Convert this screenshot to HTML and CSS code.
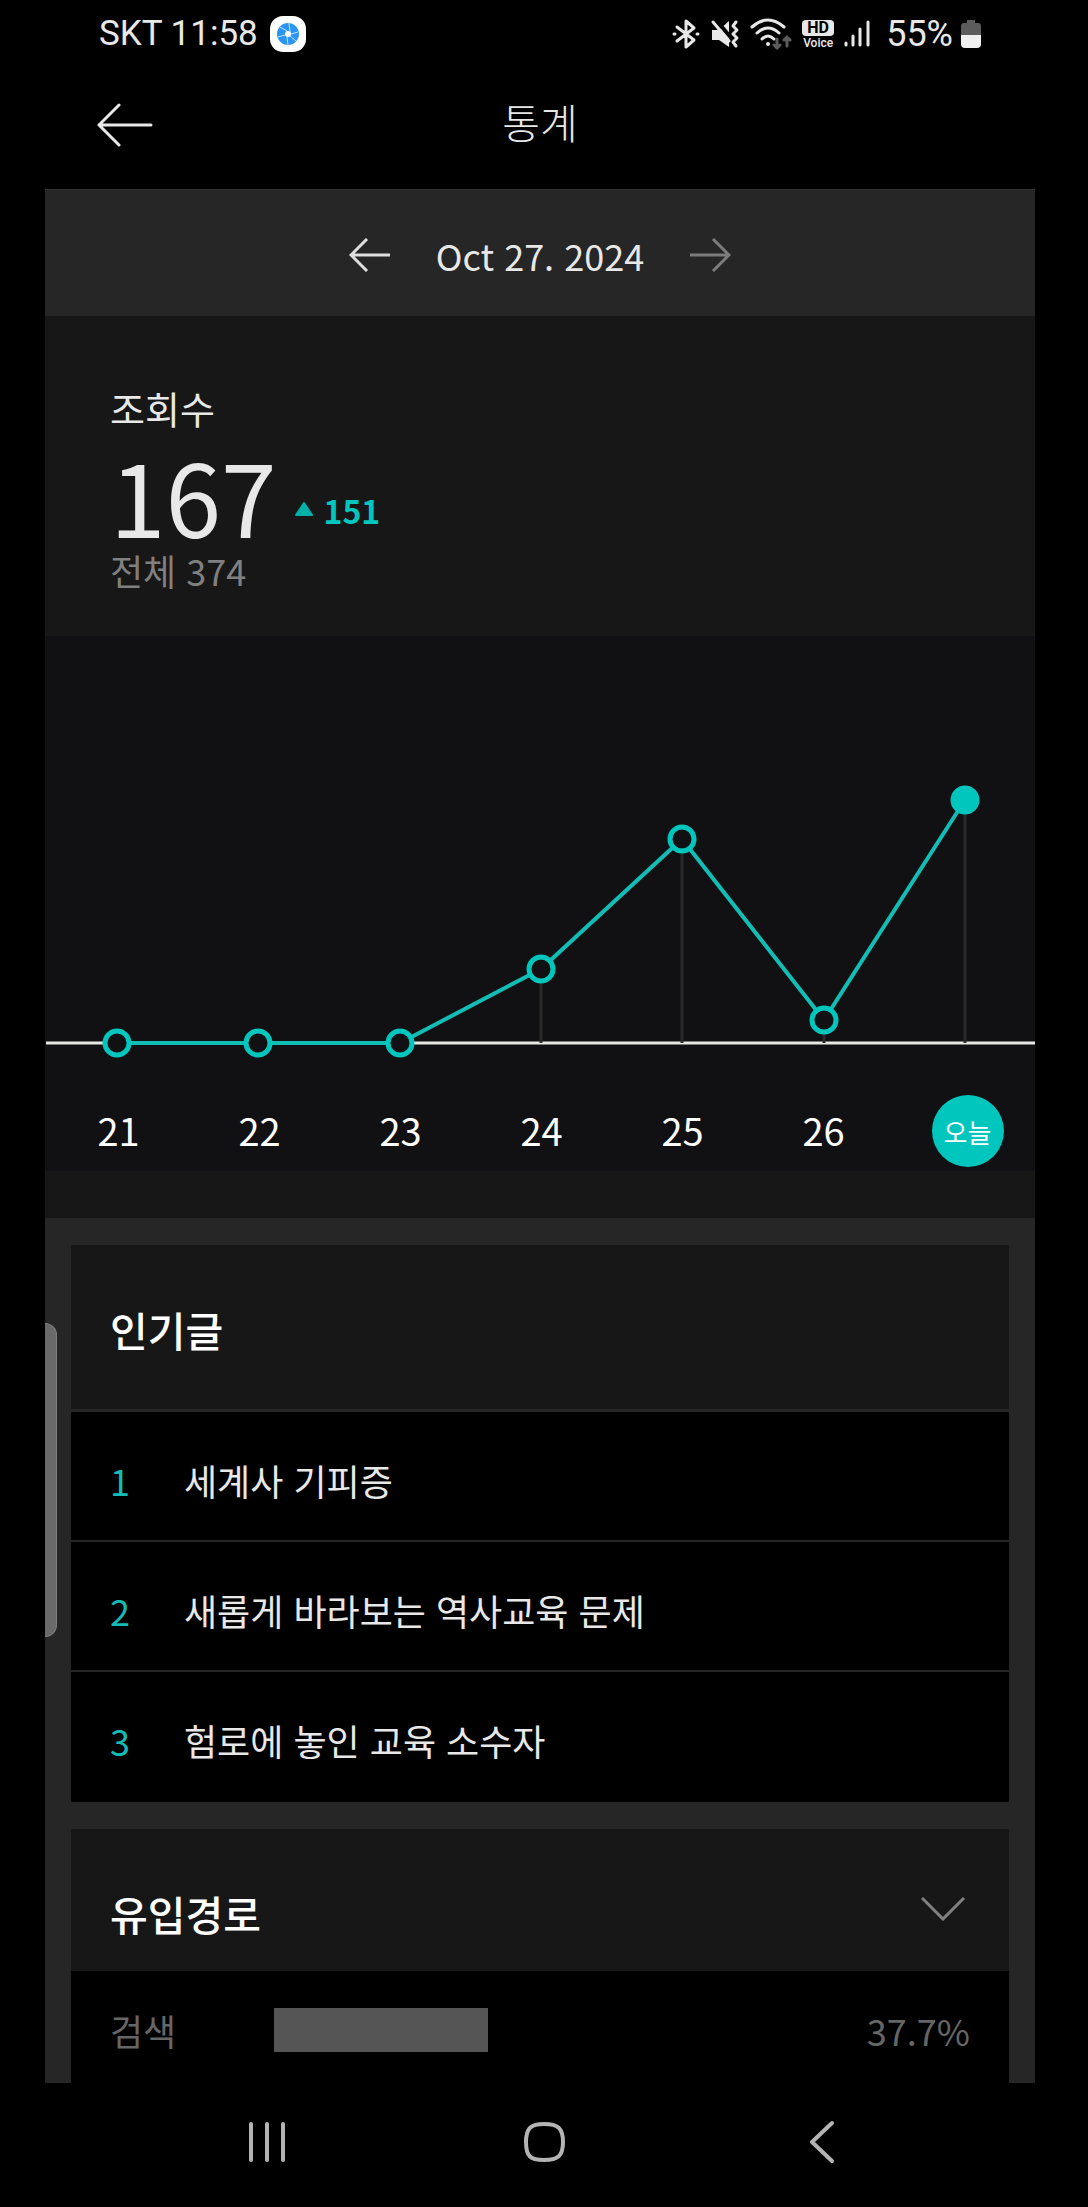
FILE: index.html
```html
<!DOCTYPE html>
<html lang="ko">
<head>
    <meta charset="UTF-8">
    <meta name="viewport" content="width=device-width, initial-scale=1.0">
    <title>통계</title>
    <link rel="stylesheet" href="styles.css">
</head>
<body>
    <div class="status-bar">
        <div class="status-left">
            <span>SKT 11:58</span>
            <svg width="36" height="36" viewBox="0 0 36 36">
                <rect x="0" y="0" width="36" height="36" rx="13" fill="#fff"/>
                <circle cx="18" cy="18" r="11" fill="#2b95f5"/>
                <g stroke="#bfe2ff" stroke-width="1" fill="none">
                    <path d="M17 15L10 11M20 16L19 7M21 18L28 16M20 20L26 25M17 21L18 29M15 19L8 21"/>
                </g>
                <circle cx="18" cy="18" r="3" fill="#fff"/>
            </svg>
        </div>
        <div class="status-right">
            <!-- bluetooth -->
            <svg width="28" height="32" viewBox="0 0 28 32" fill="none" stroke="#e8e8e8" stroke-width="3" stroke-linecap="round" stroke-linejoin="round">
                <path d="M5 9L22 22L14 29V3L22 10L5 23M2 16H3M25 16H26"/>
            </svg>
            <!-- mute / vibrate -->
            <svg width="30" height="32" viewBox="0 0 30 32">
                <path d="M2 12H9L19 3V29L9 22H2Z" fill="#e8e8e8"/>
                <path d="M6 2L22 21" stroke="#000" stroke-width="4"/>
                <path d="M3 4L19 23" stroke="#e8e8e8" stroke-width="3" stroke-linecap="round"/>
                <path d="M26 4L23 8L27 12L23 16L27 20L23 24L26 28" fill="none" stroke="#e8e8e8" stroke-width="3" stroke-linecap="round" stroke-linejoin="round"/>
            </svg>
            <!-- wifi -->
            <svg width="42" height="32" viewBox="0 0 42 32" fill="none" stroke="#e8e8e8" stroke-width="3" stroke-linecap="round">
                <path d="M2 9Q18 -5 34 9M7 15Q18 5 29 15M12 21Q18 15 24 21"/>
                <circle cx="18" cy="26" r="2" fill="#e8e8e8" stroke="none"/>
                <path d="M27 21V30M24 27L27 30L30 27M37 28V19M34 22L37 19L40 22" stroke="#5c5c5c"/>
            </svg>
            <span class="hd-voice"><b>HD</b><i>Voice</i></span>
            <!-- signal -->
            <svg width="26" height="32" viewBox="0 0 26 32" stroke="#e8e8e8" stroke-width="3" stroke-linecap="round">
                <path d="M2 25V27M9 18V27M16 11V27M24 4V27"/>
            </svg>
            <div class="battery">
                <span>55%</span>
                <svg width="20" height="32" viewBox="0 0 20 32">
                    <path d="M6 2H14V5H17Q20 5 20 8V17H0V8Q0 5 3 5H6Z" fill="#5c5c5c"/>
                    <path d="M0 17H20V26Q20 30 16 30H4Q0 30 0 26Z" fill="#f0f0f0"/>
                </svg>
            </div>
        </div>
    </div>

    <header class="app-bar">
        <button type="button" class="icon-btn" aria-label="뒤로">
            <svg width="56" height="44" viewBox="0 0 56 44" fill="none" stroke="#e8e8e8" stroke-width="3" stroke-linecap="round" stroke-linejoin="round">
                <path d="M54 22H2M22 2L2 22L22 42"/>
            </svg>
        </button>
        <h1>통계</h1>
    </header>

    <main class="content">
        <div class="date-bar">
            <div class="date-nav">
                <button type="button" class="icon-btn" aria-label="이전 날짜">
                    <svg width="42" height="34" viewBox="0 0 42 34" fill="none" stroke="#dedede" stroke-width="3">
                        <path d="M41 17H2M18 1L2 17L18 33"/>
                    </svg>
                </button>
                <span class="date">Oct 27. 2024</span>
                <button type="button" class="icon-btn" aria-label="다음 날짜">
                    <svg width="42" height="34" viewBox="0 0 42 34" fill="none" stroke="#7c7c7c" stroke-width="3">
                        <path d="M1 17H40M24 1L40 17L24 33"/>
                    </svg>
                </button>
            </div>
        </div>

        <section class="summary">
            <h2>조회수</h2>
            <div class="count-row">
                <strong class="count">167</strong>
                <span class="delta">
                    <svg width="20" height="18" viewBox="0 0 20 18"><path d="M10 2L18 14H2Z" fill="#04b0a8" stroke="#04b0a8" stroke-width="2" stroke-linejoin="round"/></svg>
                    151
                </span>
            </div>
            <p class="total">전체 374</p>
        </section>

        <section class="chart">
            <svg class="chart-plot" viewBox="0 0 990 440">
                <path d="M1 407H990" stroke="#e8e8e6" stroke-width="3"/>
                <path d="M496 333V407M637 203V407M779 384V407M920 164V407" stroke="#2a2a2a" stroke-width="3"/>
                <polyline class="chart-line" points="72,407 213,407 355,407 496,333 637,203 779,384 920,164"/>
                <g class="chart-dots">
                    <circle cx="72" cy="407" r="12"/>
                    <circle cx="213" cy="407" r="12"/>
                    <circle cx="355" cy="407" r="12"/>
                    <circle cx="496" cy="333" r="12"/>
                    <circle cx="637" cy="203" r="12"/>
                    <circle cx="779" cy="384" r="12"/>
                    <circle class="on" cx="920" cy="164" r="12"/>
                </g>
            </svg>
            <div class="chart-days">
                <span>21</span>
                <span>22</span>
                <span>23</span>
                <span>24</span>
                <span>25</span>
                <span>26</span>
                <span class="today">오늘</span>
            </div>
        </section>

        <div class="cards">
            <section class="card">
                <div class="card-head line">
                    <h2>인기글</h2>
                </div>
                <ol class="rank">
                    <li><span class="num">1</span><a href="#">세계사 기피증</a></li>
                    <li><span class="num">2</span><a href="#">새롭게 바라보는 역사교육 문제</a></li>
                    <li><span class="num">3</span><a href="#">험로에 놓인 교육 소수자</a></li>
                </ol>
            </section>

            <section class="card">
                <div class="card-head fold">
                    <h2>유입경로</h2>
                    <button type="button" class="icon-btn" aria-label="펼치기">
                        <svg width="44" height="24" viewBox="0 0 44 24" fill="none" stroke="#808080" stroke-width="3">
                            <path d="M1 1L22 22L43 1"/>
                        </svg>
                    </button>
                </div>
                <div class="source">
                    <span>검색</span>
                    <div class="track"><div class="bar" style="width: 37.7%"></div></div>
                    <span class="percent">37.7%</span>
                </div>
            </section>
        </div>

        <!-- edge panel handle -->
        <div class="edge-handle"></div>
    </main>

    <nav class="nav-bar">
        <button type="button" class="icon-btn" aria-label="최근 앱">
            <svg width="60" height="44" viewBox="0 0 60 44" stroke="#b4b4b4" stroke-width="4" stroke-linecap="round">
                <path d="M15 4V40M31 4V40M47 4V40"/>
            </svg>
        </button>
        <button type="button" class="icon-btn" aria-label="홈">
            <svg width="60" height="44" viewBox="0 0 60 44" fill="none" stroke="#b4b4b4" stroke-width="4">
                <path d="M30 4C44 4 49 8 49 22S44 40 30 40S12 36 12 22S17 4 30 4Z"/>
            </svg>
        </button>
        <button type="button" class="icon-btn" aria-label="뒤로 가기">
            <svg width="60" height="44" viewBox="0 0 60 44" fill="none" stroke="#b4b4b4" stroke-width="4" stroke-linecap="round" stroke-linejoin="round">
                <path d="M40 3L20 22L40 41"/>
            </svg>
        </button>
    </nav>
</body>
</html>
```
FILE: styles.css
```css
* {
    box-sizing: border-box;
}
body {
    margin: 0;
    background-color: #000;
    color: #e8e8e8;
    font-family: "Noto Sans CJK KR", sans-serif;
    font-size: 36px;
    line-height: 52px;
}
h1, h2, p, ol {
    margin: 0;
    padding: 0;
}
svg {
    display: block;
    flex: none;
}
.icon-btn {
    padding: 0;
    border: none;
    background: none;
    cursor: pointer;
}

/* status bar */
.status-bar {
    display: flex;
    justify-content: space-between;
    align-items: center;
    height: 68px;
    padding: 0 107px 0 99px;
    font-family: Roboto, sans-serif;
}
.status-left {
    display: flex;
    align-items: center;
    gap: 12px;
    font-size: 35px;
}
.status-right {
    display: flex;
    align-items: center;
    gap: 10px;
}
.battery {
    display: flex;
    align-items: center;
    gap: 8px;
    padding-left: 6px;
}
.hd-voice {
    display: flex;
    flex-direction: column;
    width: 32px;
    padding-top: 2px;
    text-align: center;
}
.hd-voice b {
    border-radius: 4px;
    background-color: #e8e8e8;
    color: #000;
    font-size: 16px;
    line-height: 16px;
}
.hd-voice i {
    font-size: 12px;
    font-style: normal;
    font-weight: 500;
    line-height: 14px;
}

/* app bar */
.app-bar {
    display: grid;
    grid-template-columns: 56px 1fr 56px;
    align-items: center;
    height: 121px;
    padding: 0 105px 8px 97px;
}
.app-bar h1 {
    padding-bottom: 8px;
    font-size: 41px;
    font-weight: 300;
    line-height: 60px;
    text-align: center;
}

.content {
    position: relative;
    margin: 0 53px 0 45px;
    background-color: #171717;
}

/* date */
.date-bar {
    padding: 35px 0 32px;
    border-top: 1px solid #333;
    background-color: #262626;
}
.date-nav {
    display: flex;
    justify-content: space-between;
    align-items: center;
    width: 382px;
    height: 59px;
    margin: 0 auto;
}

/* views */
.summary {
    padding: 64px 65px 44px;
}
.summary h2 {
    font-size: 38px;
    font-weight: 400;
    line-height: 56px;
}
.count-row {
    display: flex;
    align-items: flex-start;
    gap: 17px;
    height: 112px;
}
.count {
    font-size: 100px;
    font-weight: 400;
    line-height: 118px;
}
.delta {
    display: flex;
    align-items: center;
    gap: 10px;
    padding-top: 52px;
    color: #00c6be;
    font-size: 32px;
    font-weight: bold;
    line-height: 44px;
}
.total {
    color: #808080;
    line-height: 44px;
}

/* chart */
.chart {
    background-color: #111113;
}
.chart-plot {
    width: 100%;
    height: auto;
}
.chart-line {
    fill: none;
    stroke: #12bdb5;
    stroke-width: 4;
}
.chart-dots circle {
    fill: #111113;
    stroke: #00c6be;
    stroke-width: 5;
}
.chart-dots .on {
    fill: #00c6be;
}
.chart-days {
    display: grid;
    grid-template-columns: repeat(7, 1fr);
    justify-items: center;
    padding: 19px 0 4px 3px;
    color: #fff;
    font-size: 38px;
    line-height: 70px;
}
.today {
    width: 72px;
    height: 72px;
    margin-left: 6px;
    border-radius: 50%;
    background-color: #00c6be;
    font-size: 26px;
    line-height: 74px;
    text-align: center;
}

/* cards */
.cards {
    margin-top: 47px;
    padding: 27px 26px 0;
    background-color: #262626;
}
.card {
    margin-bottom: 27px;
    background-color: #000;
}
.card:last-child {
    margin-bottom: 0;
}
.card-head {
    display: flex;
    justify-content: space-between;
    align-items: flex-start;
    padding: 54px 39px 50px;
    background-color: #171717;
    color: #fff;
}
.card-head.line {
    border-bottom: 3px solid #262626;
}
.card-head.fold {
    padding: 54px 44px 28px 39px;
}
.card-head h2 {
    font-size: 41px;
    font-weight: 500;
    line-height: 60px;
}
.card-head .icon-btn {
    padding-top: 14px;
}
.rank {
    list-style: none;
}
.rank li {
    display: flex;
    padding: 42px 39px 34px;
    border-bottom: 2px solid #262626;
}
.rank li:last-child {
    border-bottom-color: #000;
}
.num {
    width: 74px;
    color: #12bdb5;
}
.rank a {
    color: #e8e8e8;
    text-decoration: none;
}
.source {
    display: grid;
    grid-template-columns: 164px 1fr 128px;
    align-items: center;
    padding: 33px 39px 27px;
    color: #666;
}
.bar {
    height: 44px;
    background-color: #555;
}
.percent {
    text-align: right;
}

.edge-handle {
    position: absolute;
    top: 1134px;
    left: 0;
    width: 12px;
    height: 314px;
    border: 1px solid #808080;
    border-left: none;
    border-radius: 0 12px 12px 0;
    background-color: #6a6a6a;
}

/* bottom navigation */
.nav-bar {
    display: flex;
    justify-content: space-between;
    align-items: center;
    height: 124px;
    padding: 0 236px 6px;
}
```
